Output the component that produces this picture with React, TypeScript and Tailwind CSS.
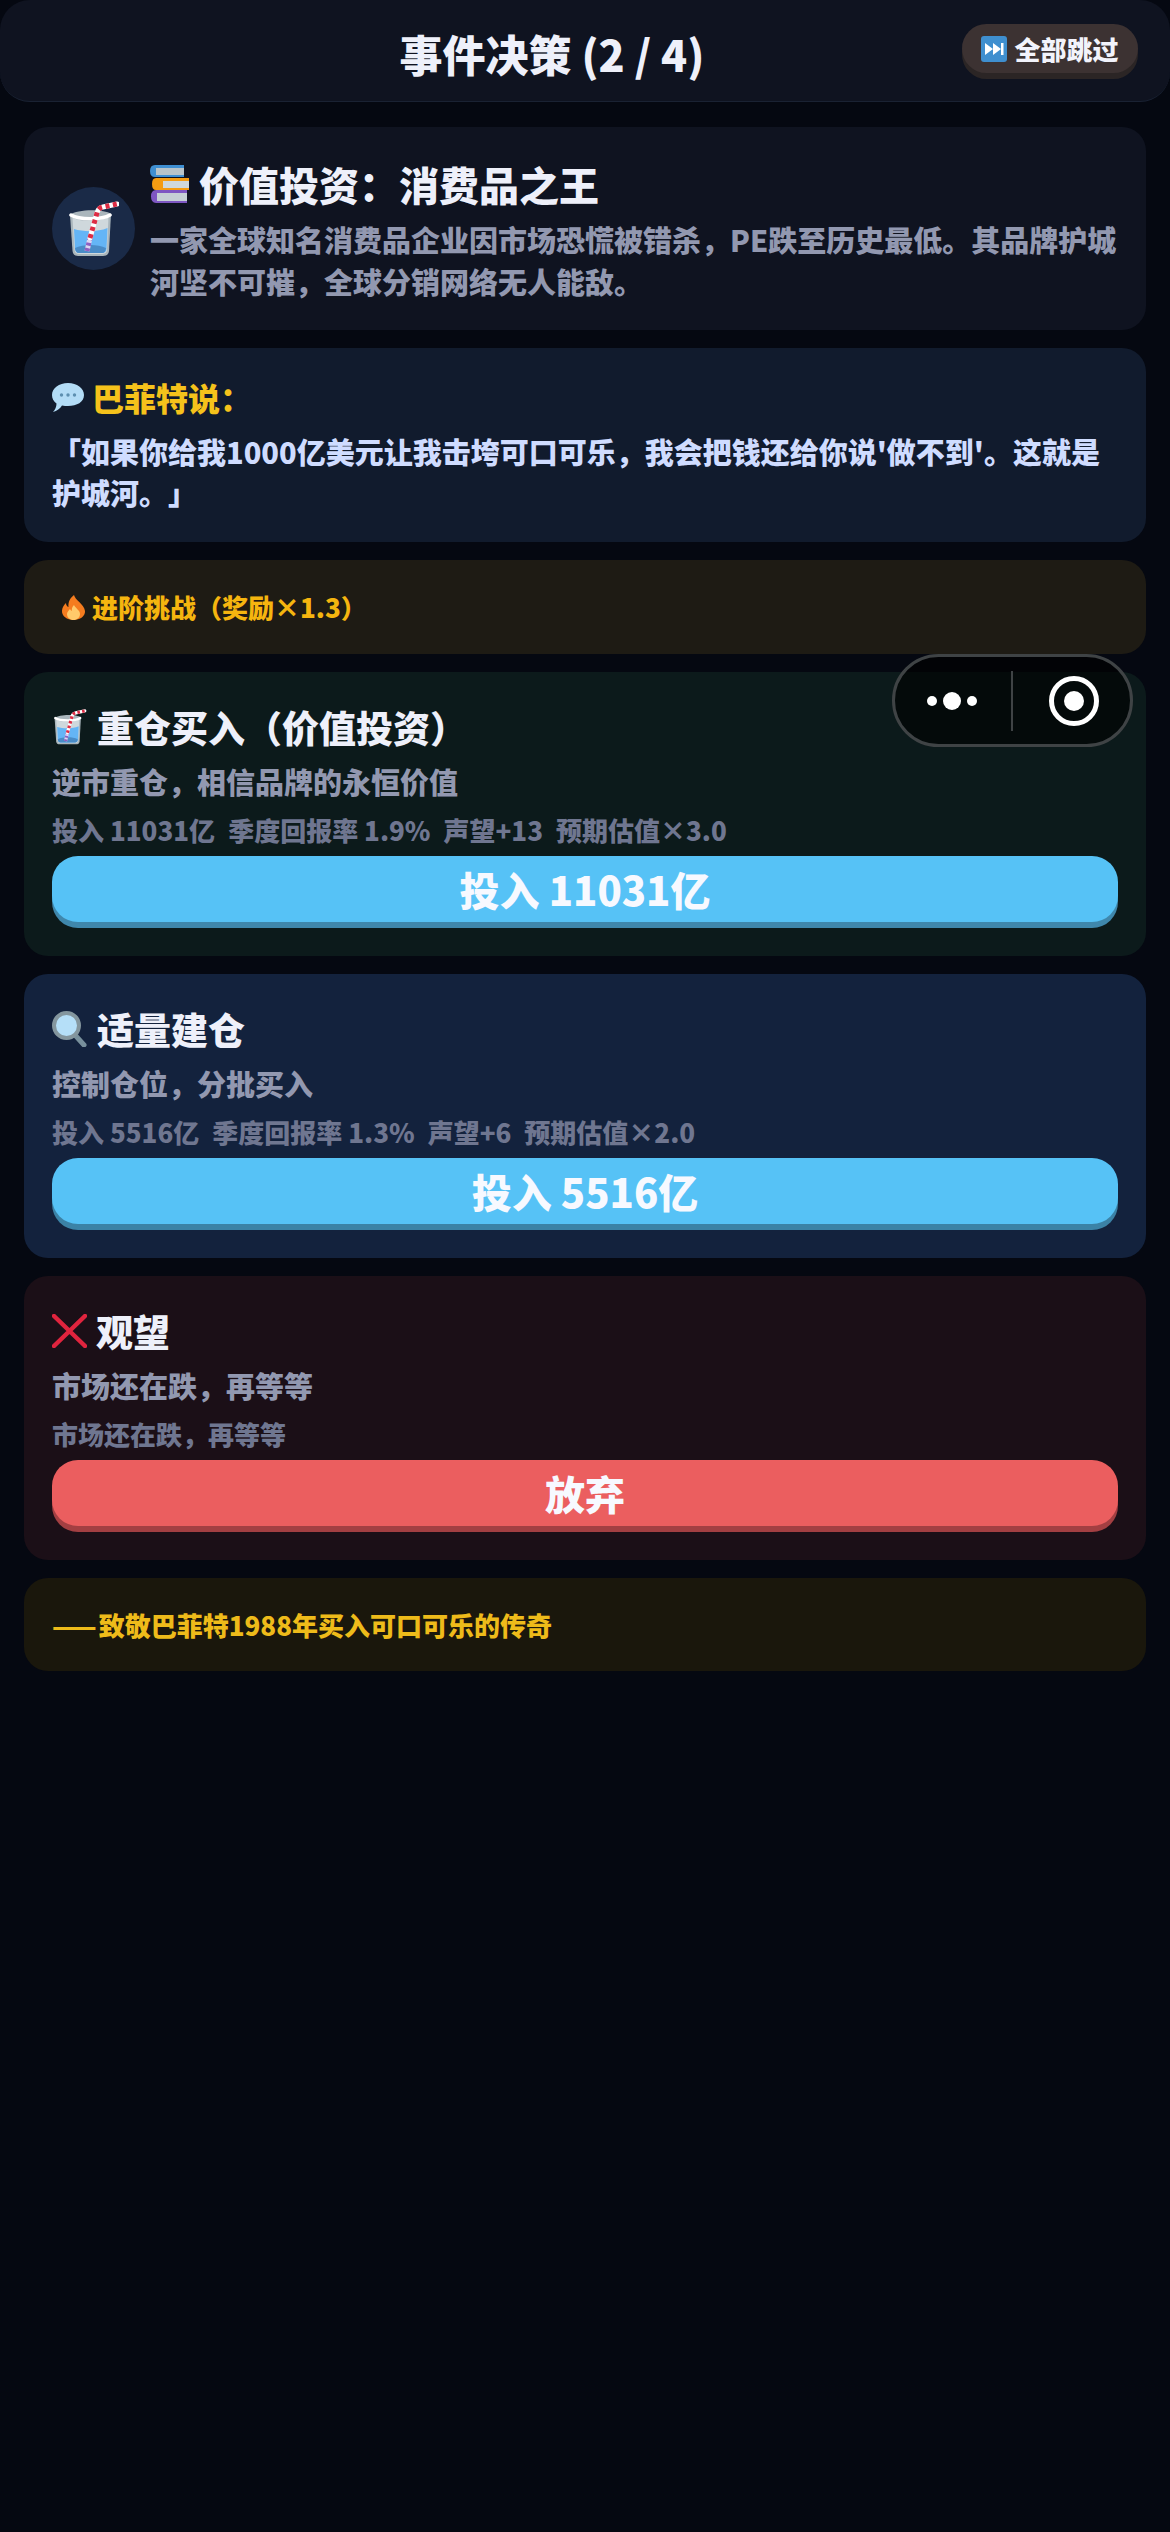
const GlassIcon = ({ className }: { className: string }) => (
  <svg viewBox="0 0 50 56" className={className}>
    <path d="M1 14C8 8 35 8 42 13L40 50Q39.500 55 34 55H9Q4 55 3.500 50Z" fill="#aab6bc" />
    <path d="M3.500 17C14 21 30 21 39.500 16L38 49Q37.500 53 33 53H10Q6 53 5.500 49Z" fill="#cfd8dc" />
    <path d="M5 28C15 31 29 31 38.500 27L37.500 48Q37 52 33 52H10Q6.500 52 6 48Z" fill="#64b5f6" />
    <path d="M6 47C14 43 29 43 37 47Q36.500 52 33 52H10Q6.500 52 6 47Z" fill="#4a8cc7" />
    <path d="M2 14C10 19 33 19 41 14" fill="none" stroke="#fff" strokeWidth="3.500" strokeLinecap="round" />
    <path d="M18 50L21 37" fill="none" stroke="#dcd6f2" strokeWidth="5" />
    <path d="M18 50L21 37" fill="none" stroke="#8e5fc0" strokeWidth="5" strokeDasharray="3 2.500" />
    <path d="M21 37L28 12Q29 7 34 6L48 3" fill="none" stroke="#fff" strokeWidth="5" strokeLinecap="round" />
    <path d="M21 37L28 12Q29 7 34 6L48 3" fill="none" stroke="#dd2c44" strokeWidth="5" strokeDasharray="4 3.500" />
  </svg>
);

const BooksIcon = ({ className }: { className: string }) => (
  <svg viewBox="0 0 39 38" className={className}>
    <path d="M5 0H34V12H5Q0 12 0 6T5 0Z" fill="#3f8fd2" />
    <rect x="6" y="3" width="28" height="7" fill="#b8c4ca" />
    <path d="M6 13H39V25H6Q2 25 2 19T6 13Z" fill="#f59c12" />
    <rect x="13" y="16" width="26" height="7" fill="#cfd8dc" />
    <path d="M6 25H37V38H6Q1 38 1 31.500T6 25Z" fill="#7e57c2" />
    <rect x="7" y="28" width="30" height="8" fill="#c5d0d5" />
  </svg>
);

const BubbleIcon = ({ className }: { className: string }) => (
  <svg viewBox="0 0 32 29" className={className}>
    <path d="M16 0C25 0 32 5 32 12S25 23 16 23C14 23 12 23 10 22.500C8 25.500 5 28 1 29C3 27 4.500 24 4.500 20.500C1.500 18.500 0 15.500 0 12C0 5 7 0 16 0Z" fill="#b3dcf6" />
    <circle cx="9.500" cy="12" r="1.700" fill="#5d8fb0" />
    <circle cx="16" cy="12" r="1.700" fill="#5d8fb0" />
    <circle cx="22.500" cy="12" r="1.700" fill="#5d8fb0" />
  </svg>
);

const FireIcon = ({ className }: { className: string }) => (
  <svg viewBox="0 0 25 25" className={className}>
    <path d="M13 0C14 5 23 9 24 16C24.500 21 19 25 12.500 25S0.500 21 1 15.500C1.300 12 3.500 9.500 5 8C5 10 6 11.500 7.500 12C7 7 9 3 13 0Z" fill="#f57c1f" />
    <path d="M13 10C14 13 19 15 19 19C19 22.500 16 25 12.500 25S6 22.500 6 19C6 16.500 8 15.500 9 14C9.500 15 10 15.500 11 16C10.500 14 11 12 13 10Z" fill="#ffca6b" />
  </svg>
);

const SearchIcon = ({ className }: { className: string }) => (
  <svg viewBox="0 0 36 36" className={className}>
    <path d="M23 24L32 34" stroke="#78909c" strokeWidth="5" strokeLinecap="round" />
    <circle cx="14.500" cy="14.500" r="12.500" fill="#b5dff8" stroke="#84969e" strokeWidth="4" />
  </svg>
);

const CrossIcon = ({ className }: { className: string }) => (
  <svg viewBox="0 0 35 34" className={className}>
    <path d="M2 2L33 32M33 2L2 32" stroke="#e0243e" strokeWidth="4.500" strokeLinecap="round" />
  </svg>
);

const SkipIcon = ({ className }: { className: string }) => (
  <svg viewBox="0 0 26 26" className={className}>
    <rect width="26" height="26" rx="3" fill="#3f8fcf" />
    <path d="M4 7L12 13L4 19ZM12 7L20 13L12 19Z" fill="#fff" />
    <rect x="20" y="7" width="2.500" height="12" fill="#fff" />
  </svg>
);

const stat = (items: string[]) => (
  <div className="mt-[3px] flex gap-[13px] text-[26px] leading-[38px] font-black text-[#6f7690]">
    {items.map((item) => (
      <span key={item}>{item}</span>
    ))}
  </div>
);

export default function App() {
  return (
    <div className="relative min-h-[2532px] bg-[#050811] font-['Noto_Sans_CJK_SC','Noto_Sans',sans-serif] font-black [text-spacing-trim:space-all]">
      <header className="flex h-[102px] items-start justify-between rounded-[30px] border-b border-[#1a2233] bg-[#0f1320] px-[32px]">
        <div className="w-[110px]" />
        <h1 className="mt-[22px] text-[43px] leading-[62px] font-black text-[#eef0fa]">事件决策 (2 / 4)</h1>
        <button className="mt-[24px] flex h-[49px] w-[176px] items-start justify-center gap-[7px] rounded-[26px] bg-[#3c3232] pt-[10px] text-[26px] leading-[30px] font-black text-[#f2f3fb] shadow-[0_6px_0_#2b2525]">
          <SkipIcon className="mt-[2px] h-[26px] w-[26px]" />
          全部跳过
        </button>
      </header>

      <main className="flex flex-col gap-[18px] px-[24px] pt-[25px]">
        <section className="flex h-[203px] items-center gap-[15px] rounded-[24px] bg-[#0f1320] px-[28px]">
          <div className="flex h-[83px] w-[83px] shrink-0 items-center justify-center rounded-full bg-[#1a2a47]">
            <GlassIcon className="h-[56px] w-[50px]" />
          </div>
          <div className="min-w-0 flex-1">
            <h2 className="flex items-center gap-[10px] text-[40px] leading-[56px] font-black text-[#eef0fa]">
              <BooksIcon className="h-[38px] w-[39px]" />
              价值投资：消费品之王
            </h2>
            <p className="mt-[6px] text-[29px] leading-[42px] text-[#9298b0]">
              一家全球知名消费品企业因市场恐慌被错杀，PE跌至历史最低。其品牌护城河坚不可摧，全球分销网络无人能敌。
            </p>
          </div>
        </section>

        <section className="h-[194px] rounded-[24px] bg-[#111b2d] px-[28px] pt-[27px]">
          <h3 className="flex items-center gap-[8px] text-[32px] leading-[44px] font-black text-[#f5c21b]">
            <BubbleIcon className="h-[29px] w-[32px]" />
            巴菲特说：
          </h3>
          <p className="mt-[12px] text-[29px] leading-[41px] text-[#cfdcff]">
            「如果你给我1000亿美元让我击垮可口可乐，我会把钱还给你说'做不到'。这就是护城河。」
          </p>
        </section>

        <section className="flex h-[94px] items-center gap-[6px] rounded-[24px] bg-[#1e1b14] pl-[37px]">
          <FireIcon className="h-[25px] w-[25px]" />
          <span className="text-[26px] leading-[36px] text-[#f5b50f]">进阶挑战（奖励×1.3）</span>
        </section>

        <section className="h-[284px] rounded-[24px] bg-[#0c1a1b] px-[28px] pt-[28px]">
          <h3 className="flex items-center gap-[9px] text-[37px] leading-[54px] font-black text-[#eef0fa]">
            <GlassIcon className="h-[36px] w-[36px]" />
            重仓买入（价值投资）
          </h3>
          <p className="text-[29px] leading-[54px] text-[#9298b0]">逆市重仓，相信品牌的永恒价值</p>
          {stat(["投入 11031亿", "季度回报率 1.9%", "声望+13", "预期估值×3.0"])}
          <button className="mt-[7px] h-[66px] w-full rounded-[26px] bg-[#56c2f6] text-[40px] leading-[58px] font-black text-[#f7f9ff] shadow-[0_6px_0_#3f87ac]">
            投入 11031亿
          </button>
        </section>

        <section className="h-[284px] rounded-[24px] bg-[#13223d] px-[28px] pt-[28px]">
          <h3 className="flex items-center gap-[9px] text-[37px] leading-[54px] font-black text-[#eef0fa]">
            <SearchIcon className="h-[36px] w-[36px]" />
            适量建仓
          </h3>
          <p className="text-[29px] leading-[54px] text-[#9298b0]">控制仓位，分批买入</p>
          {stat(["投入 5516亿", "季度回报率 1.3%", "声望+6", "预期估值×2.0"])}
          <button className="mt-[7px] h-[66px] w-full rounded-[26px] bg-[#56c2f6] text-[40px] leading-[58px] font-black text-[#f7f9ff] shadow-[0_6px_0_#3b82a6]">
            投入 5516亿
          </button>
        </section>

        <section className="h-[284px] rounded-[24px] bg-[#1b0f17] px-[28px] pt-[28px]">
          <h3 className="flex items-center gap-[9px] text-[37px] leading-[54px] font-black text-[#eef0fa]">
            <CrossIcon className="h-[34px] w-[35px]" />
            观望
          </h3>
          <p className="text-[29px] leading-[54px] text-[#9298b0]">市场还在跌，再等等</p>
          {stat(["市场还在跌，再等等"])}
          <button className="mt-[7px] h-[66px] w-full rounded-[26px] bg-[#eb5e5f] text-[40px] leading-[58px] font-black text-[#f7f9ff] shadow-[0_6px_0_#a33f42]">
            放弃
          </button>
        </section>

        <section className="flex h-[93px] items-center rounded-[24px] bg-[#1a170c] px-[28px]">
          <p className="text-[26px] leading-[36px] text-[#eebb1a]">
            <span className="tracking-[2px]">——</span>致敬巴菲特1988年买入可口可乐的传奇
          </p>
        </section>
      </main>

      {/* wechat capsule floats over the page */}
      <div className="absolute top-[654px] left-[892px] flex h-[93px] w-[241px] items-center rounded-full border-[3px] border-[#3f4345] bg-[#000000]/60">
        <div className="flex flex-1 items-center justify-center gap-[6px] pr-[3px]">
          <span className="h-[10px] w-[10px] rounded-full bg-white" />
          <span className="h-[18px] w-[18px] rounded-full bg-white" />
          <span className="h-[10px] w-[10px] rounded-full bg-white" />
        </div>
        <div className="h-[60px] w-[2px] bg-[#3f4345]" />
        <div className="flex flex-1 items-center justify-center pl-[4px]">
          <div className="flex h-[50px] w-[50px] items-center justify-center rounded-full border-[5px] border-white">
            <span className="h-[20px] w-[20px] rounded-full bg-white" />
          </div>
        </div>
      </div>
    </div>
  );
}
